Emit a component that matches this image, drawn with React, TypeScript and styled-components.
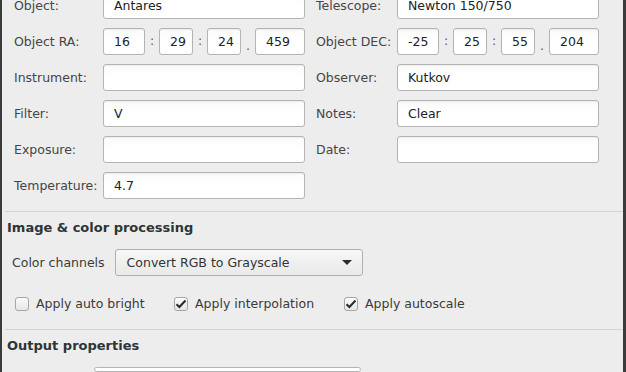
import React from "react";
import styled, { createGlobalStyle } from "styled-components";

const Global = createGlobalStyle`
  html, body {
    margin: 0;
    padding: 0;
    background: #ededed;
  }
  body {
    font-family: "DejaVu Sans", "Liberation Sans", sans-serif;
    font-size: 12.5px;
    color: #3a3a3a;
  }
`;

const Window = styled.div`
  width: 626px;
  height: 372px;
  box-sizing: border-box;
  border-left: 2px solid #3b3b3b;
  border-right: 3px solid #3b3b3b;
  background: #ededed;
  overflow: hidden;
  display: flex;
  flex-direction: column;
`;

const FormGrid = styled.div`
  margin-top: -8px;
  padding-left: 12px;
  display: grid;
  grid-template-columns: 89px 202px 92px 202px;
  row-gap: 9px;
`;

const Label = styled.div<{ $right?: boolean }>`
  height: 27px;
  display: flex;
  align-items: center;
  padding-left: ${(p) => (p.$right ? "11px" : "0")};
  color: #454545;
  white-space: nowrap;
`;

const Field = styled.div<{ $w?: number }>`
  box-sizing: border-box;
  height: 27px;
  width: ${(p) => (p.$w ? `${p.$w}px` : "100%")};
  border: 1px solid #b4b4b4;
  border-radius: 3px;
  background: linear-gradient(#fafafa, #ffffff 40%);
  box-shadow: inset 0 1px 1px rgba(0, 0, 0, 0.06);
  padding: 0 10px;
  display: flex;
  align-items: center;
  color: #222;
  white-space: nowrap;
`;

const Split = styled.div`
  display: flex;
  align-items: center;
  height: 27px;
`;

const Sep = styled.span<{ $dot?: boolean }>`
  width: 14px;
  text-align: center;
  color: #555;
  align-self: ${(p) => (p.$dot ? "flex-end" : "center")};
  padding-bottom: ${(p) => (p.$dot ? "3px" : "0")};
  line-height: 1;
`;

const Empty = styled.div``;

const Divider = styled.hr<{ $top: number }>`
  margin: ${(p) => p.$top}px 0 0 3px;
  border: 0;
  border-top: 1px solid #d4d4d4;
  height: 0;
`;

const Heading = styled.h2`
  margin: 0;
  padding: 8px 0 0 5px;
  font-size: 13px;
  font-weight: bold;
  color: #2e3436;
  line-height: 16px;
`;

const ComboRow = styled.div`
  display: flex;
  align-items: center;
  padding: 13px 0 0 10px;
  gap: 10px;
`;

const Combo = styled.div<{ $w: number }>`
  box-sizing: border-box;
  width: ${(p) => p.$w}px;
  height: 27px;
  border: 1px solid #b0b0b0;
  border-radius: 3px;
  background: linear-gradient(#f7f7f7, #e9e9e9);
  display: flex;
  align-items: center;
  justify-content: space-between;
  padding: 0 10px 0 11px;
  color: #333;
`;

const Arrow = styled.span`
  width: 0;
  height: 0;
  border-left: 5px solid transparent;
  border-right: 5px solid transparent;
  border-top: 5px solid #2e2e2e;
`;

const CheckRow = styled.div`
  display: flex;
  align-items: center;
  padding: 20px 0 0 13px;
  height: 26px;
`;

const CheckItem = styled.label<{ $w: number }>`
  width: ${(p) => p.$w}px;
  display: flex;
  align-items: center;
  gap: 7px;
  color: #3a3a3a;
  white-space: nowrap;
`;

const Box = styled.span`
  box-sizing: border-box;
  width: 14px;
  height: 14px;
  border: 1px solid #a6a6a6;
  border-radius: 3px;
  background: linear-gradient(#fbfbfb, #e6e6e6);
  display: flex;
  align-items: center;
  justify-content: center;
`;

const OutputField = styled.div`
  box-sizing: border-box;
  margin: 13px 0 0 92px;
  width: 267px;
  height: 27px;
  border: 1px solid #b4b4b4;
  border-radius: 3px;
  background: #fff;
`;

function Check({ on }: { on?: boolean }) {
  return (
    <Box>
      {on && (
        <svg width="12" height="10" viewBox="0 0 12 10">
          <path d="M1.5 5.2 L4.4 8 L10.5 1.5" fill="none" stroke="#2a2a2a" strokeWidth="2" />
        </svg>
      )}
    </Box>
  );
}

function Coord({ parts }: { parts: [string, string, string, string] }) {
  return (
    <Split>
      <Field $w={42}>{parts[0]}</Field>
      <Sep>:</Sep>
      <Field $w={34}>{parts[1]}</Field>
      <Sep>:</Sep>
      <Field $w={34}>{parts[2]}</Field>
      <Sep $dot>.</Sep>
      <Field $w={50}>{parts[3]}</Field>
    </Split>
  );
}

export default function App() {
  return (
    <>
      <Global />
      <Window>
        <FormGrid>
          <Label>Object:</Label>
          <Field>Antares</Field>
          <Label $right>Telescope:</Label>
          <Field>Newton 150/750</Field>

          <Label>Object RA:</Label>
          <Coord parts={["16", "29", "24", "459"]} />
          <Label $right>Object DEC:</Label>
          <Coord parts={["-25", "25", "55", "204"]} />

          <Label>Instrument:</Label>
          <Field />
          <Label $right>Observer:</Label>
          <Field>Kutkov</Field>

          <Label>Filter:</Label>
          <Field>V</Field>
          <Label $right>Notes:</Label>
          <Field>Clear</Field>

          <Label>Exposure:</Label>
          <Field />
          <Label $right>Date:</Label>
          <Field />

          <Label>Temperature:</Label>
          <Field>4.7</Field>
          <Empty />
          <Empty />
        </FormGrid>

        <Divider $top={12} />
        <Heading>Image &amp; color processing</Heading>
        <ComboRow>
          <span>Color channels</span>
          <Combo $w={248}>
            <span>Convert RGB to Grayscale</span>
            <Arrow />
          </Combo>
        </ComboRow>
        <CheckRow>
          <CheckItem $w={159}>
            <Check />
            Apply auto bright
          </CheckItem>
          <CheckItem $w={170}>
            <Check on />
            Apply interpolation
          </CheckItem>
          <CheckItem $w={150}>
            <Check on />
            Apply autoscale
          </CheckItem>
        </CheckRow>
        <Divider $top={18} />
        <Heading>Output properties</Heading>
        <OutputField />
      </Window>
    </>
  );
}
